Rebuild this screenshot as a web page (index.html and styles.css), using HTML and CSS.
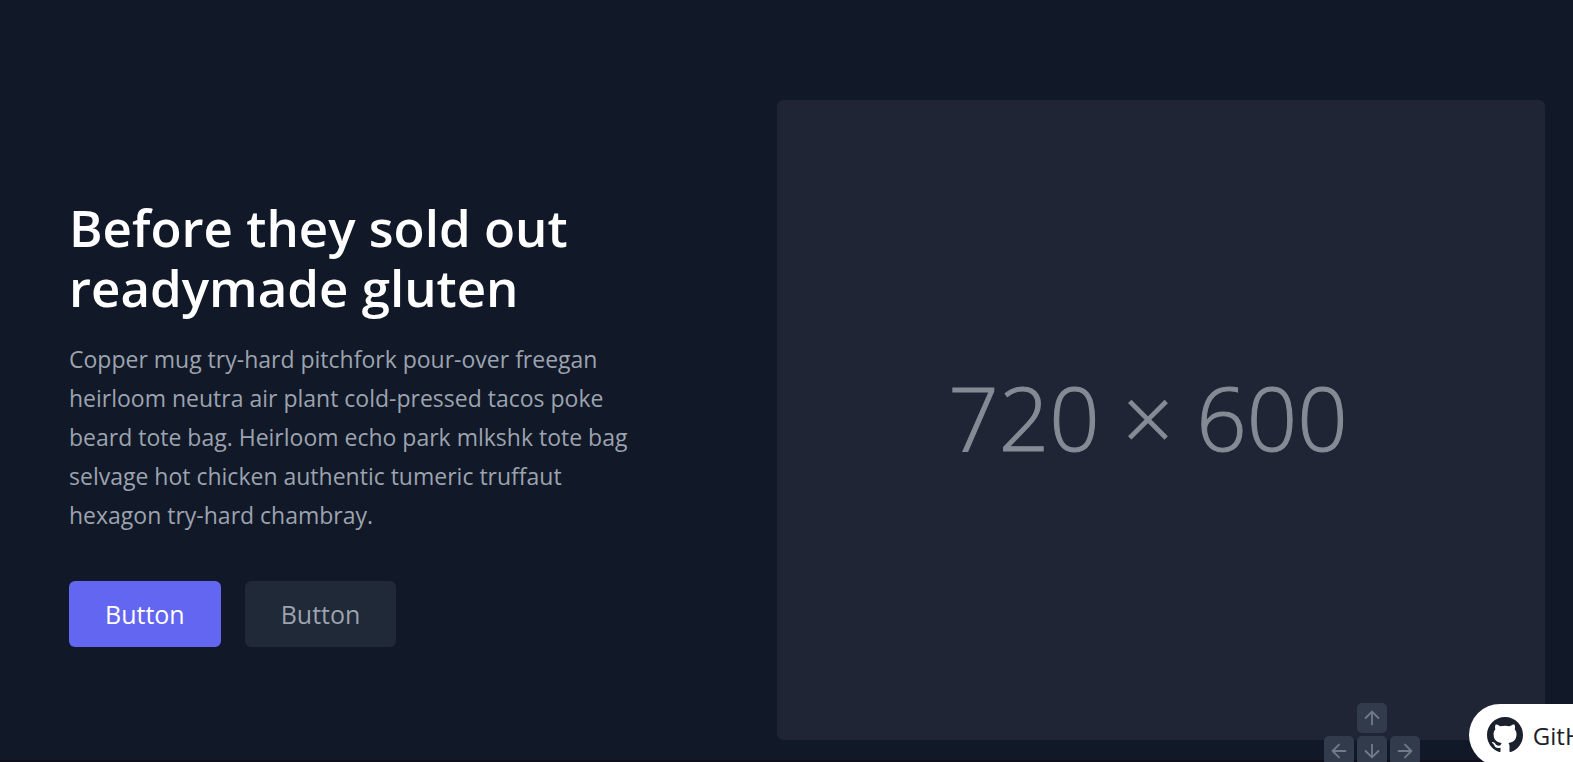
FILE: index.html
```html
<!DOCTYPE html>
<html lang="en">
<head>
<meta charset="utf-8">
<meta name="viewport" content="width=device-width, initial-scale=1">
<title>Hero block</title>
<link rel="stylesheet" href="styles.css">
</head>
<body>
<main class="hero">
  <section class="hero-copy">
    <h1 class="hero-title">Before they sold out<br>readymade gluten</h1>
    <p class="hero-text">Copper mug try-hard pitchfork pour-over freegan heirloom neutra air plant cold-pressed tacos poke beard tote bag. Heirloom echo park mlkshk tote bag selvage hot chicken authentic tumeric truffaut hexagon try-hard chambray.</p>
    <div class="hero-actions">
      <button class="btn btn-primary" type="button">Button</button>
      <button class="btn btn-muted" type="button">Button</button>
    </div>
  </section>
  <figure class="hero-figure">
    <svg class="placeholder" viewBox="0 0 720 600" role="img" aria-label="720 × 600">
      <text class="placeholder-text" x="348" y="329">720 × 600</text>
    </svg>
  </figure>
</main>

<div class="keys">
  <button class="key key-up" type="button" aria-label="Up"><svg viewBox="0 0 24 24"><path d="M12 19V5M5 12l7-7 7 7"/></svg></button>
  <button class="key" type="button" aria-label="Left"><svg viewBox="0 0 24 24"><path d="M19 12H5M12 19l-7-7 7-7"/></svg></button>
  <button class="key" type="button" aria-label="Down"><svg viewBox="0 0 24 24"><path d="M12 5v14M19 12l-7 7-7-7"/></svg></button>
  <button class="key" type="button" aria-label="Right"><svg viewBox="0 0 24 24"><path d="M5 12h14M12 5l7 7-7 7"/></svg></button>
</div>

<a class="github" href="#">
  <svg class="github-icon" viewBox="0 0 16 16" aria-hidden="true"><path d="M8 0C3.58 0 0 3.58 0 8c0 3.54 2.29 6.53 5.47 7.59.4.07.55-.17.55-.38 0-.19-.01-.82-.01-1.49-2.01.37-2.53-.49-2.69-.94-.09-.23-.48-.94-.82-1.13-.28-.15-.68-.52-.01-.53.63-.01 1.08.58 1.23.82.72 1.21 1.87.87 2.33.66.07-.52.28-.87.51-1.07-1.78-.2-3.64-.89-3.64-3.95 0-.87.31-1.59.82-2.15-.08-.2-.36-1.02.08-2.12 0 0 .67-.21 2.2.82.64-.18 1.32-.27 2-.27s1.36.09 2 .27c1.53-1.04 2.2-.82 2.2-.82.44 1.1.16 1.92.08 2.12.51.56.82 1.27.82 2.15 0 3.07-1.87 3.75-3.65 3.95.29.25.54.73.54 1.48 0 1.07-.01 1.93-.01 2.2 0 .21.15.46.55.38A8.01 8.01 0 0 0 16 8c0-4.42-3.58-8-8-8z"/></svg>
  <span>GitHub</span>
</a>
</body>
</html>
```
FILE: styles.css
```css
* {
  box-sizing: border-box;
}

body {
  margin: 0;
  min-height: 100vh;
  overflow: hidden;
  background: #111827;
  font-family: "Open Sans", "Noto Sans", sans-serif;
}

.hero {
  display: flex;
  align-items: center;
  padding: 100px 28px 20px 69px;
  border-bottom: 2px solid #110e1c;
}

.hero-copy {
  flex: 1;
  padding: 4px 128px 0 0;
}

.hero-title {
  margin: 0 0 23px;
  color: #fff;
  font-size: 51px;
  font-weight: 600;
  line-height: 60px;
}

.hero-text {
  margin: 0 0 46px;
  color: #9ca3af;
  font-size: 23px;
  line-height: 39px;
}

.hero-actions {
  display: flex;
  gap: 24px;
}

.btn {
  padding: 12px 36px;
  border: 0;
  border-radius: 6px;
  font-family: inherit;
  font-size: 25px;
  line-height: 42px;
}

.btn-primary {
  background: #6366f1;
  color: #fff;
}

.btn-muted {
  background: #1f2937;
  color: #9ca3af;
}

.hero-figure {
  width: 52%;
  margin: 0;
}

.placeholder {
  display: block;
  width: 100%;
  border-radius: 6px;
  background: #1f2535;
}

.placeholder-text {
  fill: #858b95;
  stroke: #858b95;
  stroke-width: 1;
  font-size: 83px;
  font-weight: 300;
  text-anchor: middle;
}

.keys {
  position: fixed;
  right: 153px;
  bottom: -4px;
  display: grid;
  grid-template-columns: repeat(3, 30px);
  gap: 3px;
}

.key {
  display: grid;
  place-items: center;
  height: 30px;
  padding: 0;
  border: 0;
  border-radius: 5px;
  background: #323b4b;
}

.key-up {
  grid-column: 2;
}

.key:nth-child(2) {
  grid-column: 1;
}

.key svg {
  width: 22px;
  fill: none;
  stroke: #717a89;
  stroke-width: 2;
  stroke-linecap: round;
  stroke-linejoin: round;
}

.github {
  position: fixed;
  right: -63px;
  bottom: -4px;
  display: flex;
  align-items: center;
  gap: 10px;
  height: 62px;
  padding: 0 24px 0 18px;
  border-radius: 31px;
  background: #fff;
  color: #1a202c;
  font-size: 24px;
  font-weight: 500;
  text-decoration: none;
}

.github-icon {
  width: 36px;
  fill: #1a202c;
}
```
